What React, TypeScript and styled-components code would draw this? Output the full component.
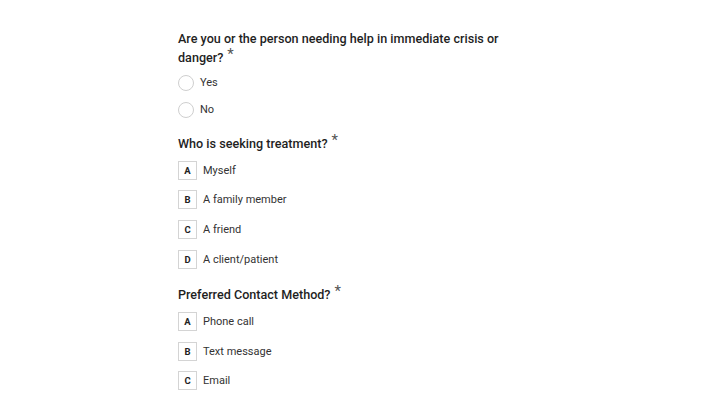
import styled, { createGlobalStyle } from "styled-components";

const GlobalStyle = createGlobalStyle`
  body {
    margin: 0;
    background: #ffffff;
    font-family: Roboto, "Noto Sans", sans-serif;
  }
`;

const Page = styled.div`
  width: 364px;
  margin: 0 auto;
  padding-top: 29px;
`;

const Question = styled.section`
  margin-bottom: 16px;
`;

const Title = styled.h3`
  margin: 0 0 7px;
  font-size: 12.6px;
  line-height: 19px;
  font-weight: 500;
  color: #1f1f1f;
`;

const Required = styled.span`
  display: inline-block;
  font-size: 15px;
  line-height: 12px;
  height: 12px;
  vertical-align: top;
  font-weight: 400;
  color: #555;
  margin-left: 4px;
`;

const Options = styled.div<{ $gap: number }>`
  display: flex;
  flex-direction: column;
  gap: ${(p) => p.$gap}px;
`;

const RadioRow = styled.label`
  display: flex;
  align-items: center;
  height: 17px;
  gap: 6px;
  font-size: 11px;
  color: #333;
`;

const Circle = styled.span`
  width: 16px;
  height: 16px;
  box-sizing: border-box;
  border: 1px solid #cfcfcf;
  border-radius: 50%;
  background: #fff;
`;

const ChoiceRow = styled.label`
  display: flex;
  align-items: center;
  height: 20px;
  gap: 6px;
  font-size: 11px;
  color: #333;
`;

const Key = styled.span`
  width: 19px;
  height: 19px;
  box-sizing: border-box;
  border: 1px solid #d4d4d4;
  display: flex;
  align-items: center;
  justify-content: center;
  font-size: 9.5px;
  font-weight: 700;
  color: #222;
`;

interface Choice {
  key: string;
  label: string;
}

function ChoiceQuestion({ title, choices }: { title: string; choices: Choice[] }) {
  return (
    <Question>
      <Title>
        {title}
        <Required>*</Required>
      </Title>
      <Options $gap={9.75}>
        {choices.map((c) => (
          <ChoiceRow key={c.key}>
            <Key>{c.key}</Key>
            {c.label}
          </ChoiceRow>
        ))}
      </Options>
    </Question>
  );
}

export default function App() {
  return (
    <>
      <GlobalStyle />
      <Page>
        <Question>
          <Title>
            Are you or the person needing help in immediate crisis or danger?
            <Required>*</Required>
          </Title>
          <Options $gap={10}>
            <RadioRow>
              <Circle />
              Yes
            </RadioRow>
            <RadioRow>
              <Circle />
              No
            </RadioRow>
          </Options>
        </Question>
        <ChoiceQuestion
          title="Who is seeking treatment?"
          choices={[
            { key: "A", label: "Myself" },
            { key: "B", label: "A family member" },
            { key: "C", label: "A friend" },
            { key: "D", label: "A client/patient" },
          ]}
        />
        <ChoiceQuestion
          title="Preferred Contact Method?"
          choices={[
            { key: "A", label: "Phone call" },
            { key: "B", label: "Text message" },
            { key: "C", label: "Email" },
          ]}
        />
      </Page>
    </>
  );
}
